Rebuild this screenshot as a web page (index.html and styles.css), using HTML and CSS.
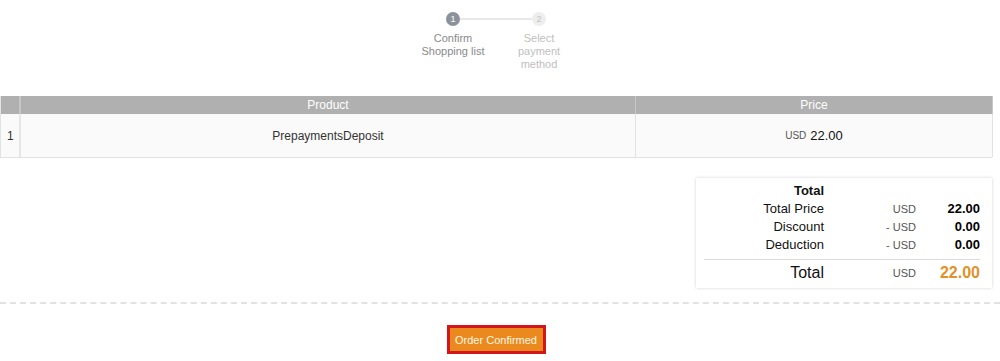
FILE: index.html
```html
<!DOCTYPE html>
<html>
<head>
<meta charset="utf-8">
<link rel="stylesheet" href="styles.css">
</head>
<body>
<div class="page">
  <div class="stepper">
    <div class="dots">
      <span class="dot active">1</span>
      <span class="track"></span>
      <span class="dot">2</span>
    </div>
    <div class="labels">
      <span class="label active">Confirm<br>Shopping list</span>
      <span class="label">Select<br>payment<br>method</span>
    </div>
  </div>

  <div class="table">
    <div class="cell head idx"></div>
    <div class="cell head">Product</div>
    <div class="cell head">Price</div>
    <div class="cell body idx">1</div>
    <div class="cell body">PrepaymentsDeposit</div>
    <div class="cell body"><span class="cur">USD</span> <span class="amt">22.00</span></div>
  </div>

  <div class="summary-wrap">
    <div class="summary">
      <div class="lbl strong">Total</div><div></div><div></div>
      <div class="lbl">Total Price</div><div class="cur2">USD</div><div class="val">22.00</div>
      <div class="lbl">Discount</div><div class="cur2">- USD</div><div class="val">0.00</div>
      <div class="lbl">Deduction</div><div class="cur2">- USD</div><div class="val">0.00</div>
      <div class="rule"></div>
      <div class="lbl big">Total</div><div class="cur2 bigc">USD</div><div class="val big orange">22.00</div>
    </div>
  </div>

  <div class="dash"></div>

  <div class="actions">
    <button class="confirm">Order Confirmed</button>
  </div>
</div>
</body>
</html>
```
FILE: styles.css
```css
html, body { margin: 0; padding: 0; background: #fff; }
body { font-family: "Liberation Sans", Arial, sans-serif; color: #222; }
.page { width: 992px; }

.stepper { display: flex; flex-direction: column; align-items: center; padding-top: 12px; }
.dots { display: flex; align-items: center; }
.dot { width: 14px; height: 14px; border-radius: 50%; background: #eeeeee; color: #c4c4c4;
  font-size: 9px; line-height: 14px; text-align: center; }
.dot.active { background: #8b929c; color: #fff; }
.track { width: 72px; height: 2px; background: #e8e8e8; }
.labels { display: flex; margin-top: 6px; }
.label { width: 86px; text-align: center; font-size: 11px; line-height: 13px; color: #c0c0c0; }
.label.active { color: #8a8a8a; }

.table { display: grid; grid-template-columns: 20px 615px 357px; margin-top: 25px;
  border-left: 1px solid #e2e2e2; border-bottom: 1px solid #e2e2e2; }
.cell { display: flex; align-items: center; justify-content: center; border-right: 1px solid #e2e2e2; }
.cell.head { background: #b0b0b0; color: #fff; font-size: 12px; height: 18px; border-right-color: #c8c8c8; }
.cell.body { background: #fafafa; height: 43px; font-size: 12px; color: #333; }
.cell.idx { justify-content: flex-start; padding-left: 6px; }
.cell.head.idx { border-right: 2px solid #c6c6c6; }
.cell.body.idx { border-right: 2px solid #e6e6e6; }
.cur { font-size: 10px; color: #555; margin-right: 4px; }
.amt { font-size: 13px; color: #111; }

.summary-wrap { display: flex; justify-content: flex-end; margin-top: 20px; }
.summary { box-sizing: border-box; width: 296px; display: grid; grid-template-columns: 120px 92px 64px;
  padding: 4px 12px 1px 8px; box-shadow: 0 0 3px rgba(0,0,0,0.18); background: #fff; }
.lbl { text-align: right; font-size: 13px; line-height: 18px; color: #111; }
.strong { font-weight: bold; }
.cur2 { text-align: right; font-size: 11px; line-height: 18px; color: #555; }
.val { text-align: right; font-size: 13px; line-height: 18px; font-weight: bold; color: #000; }
.rule { grid-column: 1 / 4; border-top: 1px solid #dcdcdc; margin-top: 5px; }
.big { font-size: 16px; line-height: 25px; font-weight: normal; }
.val.big { font-weight: bold; }
.bigc { line-height: 27px; }
.orange { color: #e1912a; }

.dash { margin-top: 14px; width: 1000px; border-top: 2px dashed #e2e2e2; }

.actions { display: flex; justify-content: center; margin-top: 21px; }
.confirm { width: 99px; height: 29px; padding: 0; border: 3px solid #d2161c; background: #ea8a1e;
  color: #fff7e6; font-family: "Liberation Sans", Arial, sans-serif; font-size: 11px; }
```
